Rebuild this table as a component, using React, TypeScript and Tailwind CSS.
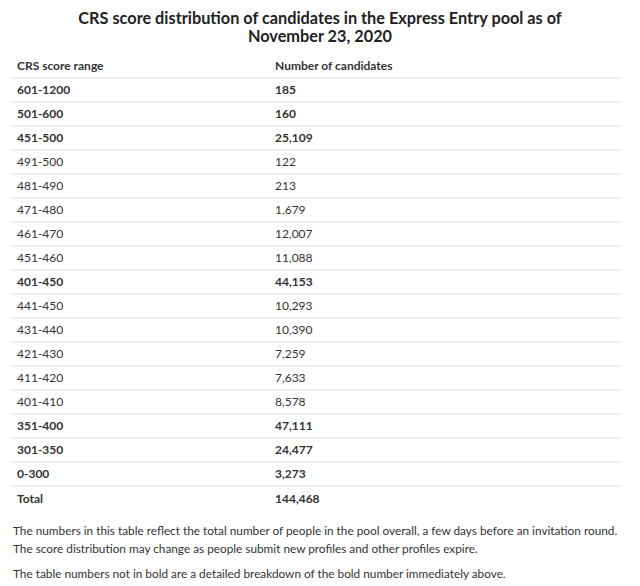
const rows: [string, string, boolean][] = [
  ['601-1200', '185', true],
  ['501-600', '160', true],
  ['451-500', '25,109', true],
  ['491-500', '122', false],
  ['481-490', '213', false],
  ['471-480', '1,679', false],
  ['461-470', '12,007', false],
  ['451-460', '11,088', false],
  ['401-450', '44,153', true],
  ['441-450', '10,293', false],
  ['431-440', '10,390', false],
  ['421-430', '7,259', false],
  ['411-420', '7,633', false],
  ['401-410', '8,578', false],
  ['351-400', '47,111', true],
  ['301-350', '24,477', true],
  ['0-300', '3,273', true],
  ['Total', '144,468', true],
]

export default function App() {
  return (
    <div className="min-h-[586px] w-[640px] bg-white px-[13px] pt-[9px] font-['Lato',sans-serif] text-[#333]">
      <h2 className="text-center text-[16.3px] font-bold leading-[18px] text-[#222]">
        CRS score distribution of candidates in the Express Entry pool as of
        <br />
        November 23, 2020
      </h2>

      <table className="mt-[10px] w-[608px] text-[12px]">
        <thead>
          <tr className="border-b-2 border-[#eeeeee]">
            <th className="h-[23px] w-[262px] pl-[4px] text-left font-bold">CRS score range</th>
            <th className="h-[23px] text-left font-bold">Number of candidates</th>
          </tr>
        </thead>
        <tbody>
          {rows.map(([range, count, bold], i) => (
            <tr key={i} className={i < rows.length - 1 ? 'border-b-2 border-[#eeeeee]' : ''}>
              <td className={`h-[24px] pl-[4px] ${bold ? 'font-bold' : ''}`}>{range}</td>
              <td className={`h-[24px] ${bold ? 'font-bold' : ''}`}>{count}</td>
            </tr>
          ))}
        </tbody>
      </table>

      <div className="mt-[12px] text-[11.8px] leading-[18px] text-[#333]">
        <p className="whitespace-nowrap">
          The numbers in this table reflect the total number of people in the pool overall, a few days before an
          invitation round.
          <br />
          The score distribution may change as people submit new profiles and other profiles expire.
        </p>
        <p className="mt-[7px]">The table numbers not in bold are a detailed breakdown of the bold number immediately above.</p>
      </div>
    </div>
  )
}
